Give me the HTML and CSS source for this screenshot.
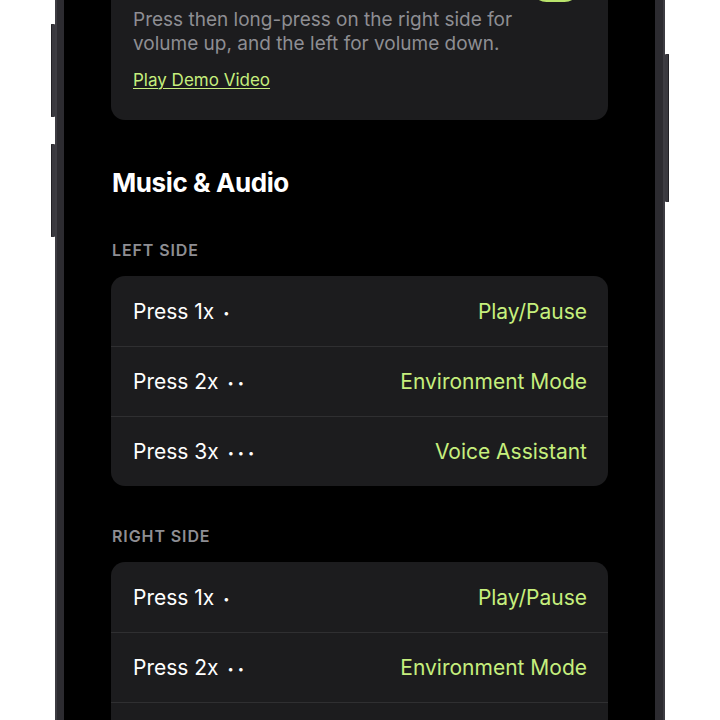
FILE: index.html
```html
<!DOCTYPE html>
<html>
    <head>
        <title>Controls - Music &amp; Audio</title>
        <link rel="stylesheet" href="styles.css">
    </head>
    <body>
        <div class="phone">
            <span class="side-btn left top"></span>
            <span class="side-btn left bottom"></span>
            <span class="side-btn right"></span>

            <div class="screen">
                <div class="content">
                    <!-- volume gesture card, scrolled partly out of view -->
                    <section class="card intro">
                        <div class="intro-head">
                            <span class="toggle"><span class="knob"></span></span>
                        </div>
                        <p class="intro-text">Press then long-press on the right side for volume up, and the left for volume down.</p>
                        <a class="demo-link" href="#">Play Demo Video</a>
                    </section>

                    <h2 class="section-title">Music &amp; Audio</h2>

                    <h3 class="group-label">Left Side</h3>
                    <ul class="card list">
                        <li class="row"><span class="press">Press 1x <span class="dots">•</span></span><span class="action">Play/Pause</span></li>
                        <li class="row"><span class="press">Press 2x <span class="dots">••</span></span><span class="action">Environment Mode</span></li>
                        <li class="row"><span class="press">Press 3x <span class="dots">•••</span></span><span class="action">Voice Assistant</span></li>
                    </ul>

                    <h3 class="group-label">Right Side</h3>
                    <ul class="card list">
                        <li class="row"><span class="press">Press 1x <span class="dots">•</span></span><span class="action">Play/Pause</span></li>
                        <li class="row"><span class="press">Press 2x <span class="dots">••</span></span><span class="action">Environment Mode</span></li>
                        <li class="row"><span class="press">Press 3x <span class="dots">•••</span></span><span class="action">Voice Assistant</span></li>
                    </ul>
                </div>
            </div>
        </div>
    </body>
</html>
```

FILE: styles.css
```css
:root {
    --card: #1c1c1e;
    --line: #2f2f31;
    --muted: #8e8e93;
    --lime: #c6ef7d;
}

* {
    box-sizing: border-box;
}

body {
    margin: 0;
    height: 720px;
    overflow: hidden;
    background: #fff;
    font-family: Inter, "Noto Sans", sans-serif;
    -webkit-font-smoothing: antialiased;
}

/* phone body: frame around the black screen */
.phone {
    position: relative;
    margin-left: 55px;
    width: 610px;
    height: 720px;
    padding: 0 10px 0 9px;
    background: #2c2b30;
    box-shadow: inset 2px 0 0 #3d3c42, inset -2px 0 0 #3d3c42;
}

.side-btn {
    position: absolute;
    width: 4px;
    background: #3a393f;
    border-radius: 1px;
}
.side-btn.left {
    left: -4px;
    box-shadow: inset 1px 0 0 #222126;
}
.side-btn.left.top {
    top: 24px;
    height: 93px;
}
.side-btn.left.bottom {
    top: 144px;
    height: 93px;
}
.side-btn.right {
    right: -4px;
    top: 54px;
    height: 148px;
    box-shadow: inset -1px 0 0 #222126;
}

.screen {
    height: 100%;
    background: #000;
    overflow: hidden;
}

.content {
    margin-top: -45px;
    padding: 0 47px;
}

.card {
    background: var(--card);
    border-radius: 14px;
}

/* intro card */
.intro {
    padding: 16px 22px 29px;
}

.intro-head {
    display: flex;
    align-items: center;
    justify-content: flex-end;
    height: 31px;
    padding-right: 6px;
    margin-bottom: 6px;
}

.toggle {
    position: relative;
    width: 49px;
    height: 31px;
    border-radius: 16px;
    background: #b9e36c;
}
.toggle .knob {
    position: absolute;
    right: 2px;
    top: 2px;
    width: 27px;
    height: 27px;
    border-radius: 50%;
    background: #fff;
}

.intro-text {
    max-width: 440px;
    margin: 0;
    color: var(--muted);
    font-size: 19px;
    line-height: 24px;
}

.demo-link {
    display: inline-block;
    margin-top: 13px;
    color: var(--lime);
    font-size: 17px;
    line-height: 22px;
    text-decoration: underline;
    text-underline-offset: 2px;
    text-decoration-thickness: 1px;
}

/* headings */
.section-title {
    margin: 47px 0 0 1px;
    color: #fff;
    font-size: 26px;
    line-height: 32px;
    font-weight: 700;
    letter-spacing: -0.4px;
}

.group-label {
    margin: 41px 0 15px 1px;
    color: var(--muted);
    font-size: 16px;
    line-height: 21px;
    font-weight: 600;
    text-transform: uppercase;
    letter-spacing: 0.9px;
}
.list + .group-label {
    margin-top: 40px;
}

/* press action rows */
.list {
    list-style: none;
    margin: 0;
    padding: 0;
}

.row {
    display: flex;
    align-items: center;
    justify-content: space-between;
    height: 70px;
    padding: 0 21px 0 22px;
    font-size: 21px;
}
.row + .row {
    border-top: 1px solid var(--line);
}

.press {
    color: #fff;
}

.dots {
    margin-left: 3px;
    font-size: 11px;
    letter-spacing: 4px;
    vertical-align: 2px;
}

.action {
    color: var(--lime);
}
```
